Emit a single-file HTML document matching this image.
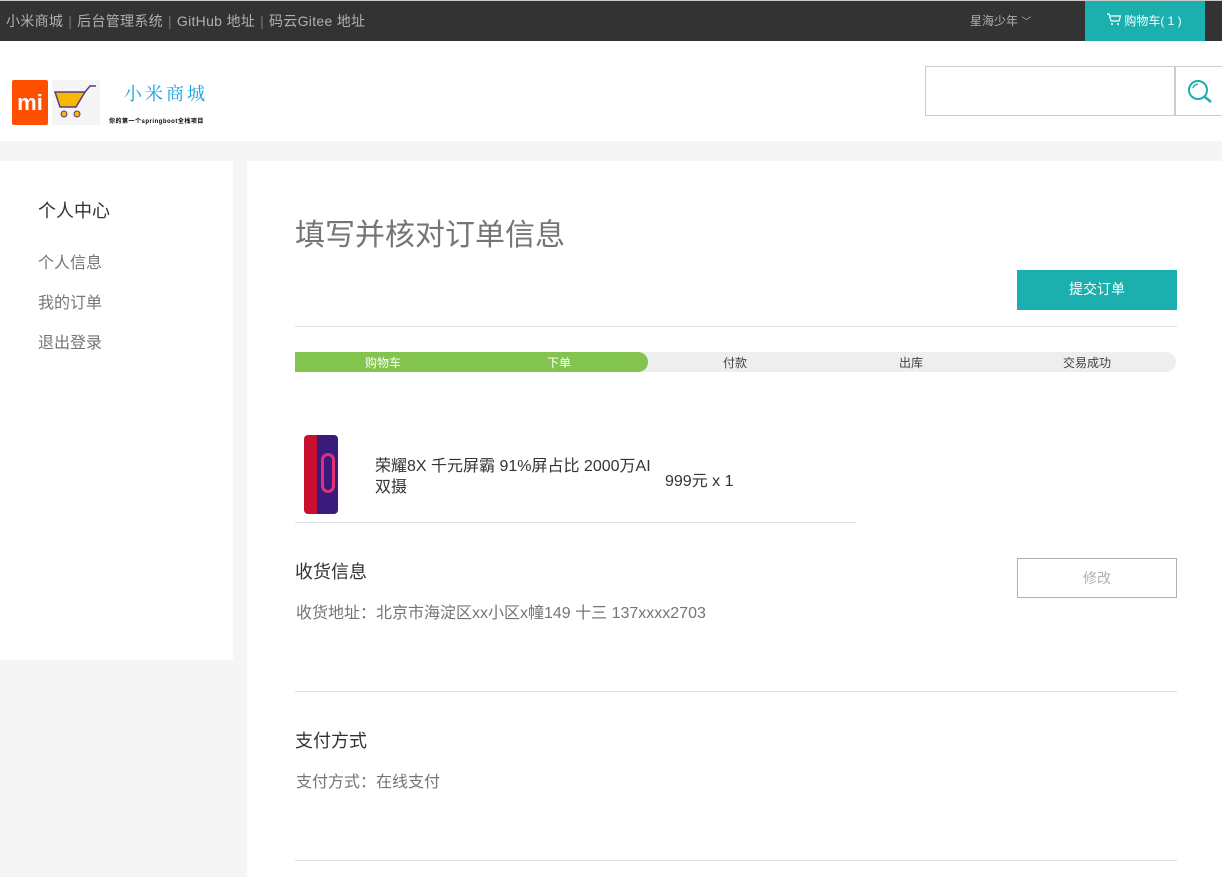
<!DOCTYPE html>
<html><head><meta charset="utf-8"><style>
*{margin:0;padding:0;box-sizing:border-box}
body{width:1222px;height:877px;overflow:hidden;background:#f5f5f5;font-family:"Liberation Sans","Noto Sans CJK SC",sans-serif;position:relative}
.a{position:absolute}
</style></head><body>
<div class="a" style="left:0;top:0;width:1222px;height:41px;background:#333;border-top:1px solid #ccc"></div>
<div class="a" style="left:6px;top:11px;font-size:14px;color:#b0b0b0;white-space:nowrap;letter-spacing:0.3px">小米商城<span style="color:#777;margin:0 5px">|</span>后台管理系统<span style="color:#777;margin:0 5px">|</span>GitHub 地址<span style="color:#777;margin:0 5px">|</span>码云Gitee 地址</div>
<div class="a" style="left:970px;top:12px;font-size:12px;color:#b0b0b0">星海少年 <span style="font-size:10px">﹀</span></div>
<div class="a" style="left:1085px;top:1px;width:120px;height:40px;background:#1bb0ad;color:#fff;font-size:12px;line-height:40px;padding-left:22px">
<svg width="14" height="13" viewBox="0 0 14 13" style="vertical-align:-1px"><path d="M0 1h2l2 7h8l1.5-5H3.5" fill="none" stroke="#fff" stroke-width="1.2"/><circle cx="5" cy="11" r="1" fill="#fff"/><circle cx="11" cy="11" r="1" fill="#fff"/></svg> 购物车( 1 )</div>
<div class="a" style="left:0;top:41px;width:1222px;height:100px;background:#fff"></div>
<div class="a" style="left:12px;top:80px;width:36px;height:45px;background:#ff4f00;border-radius:2px;color:#fff;font-weight:bold;font-size:22px;text-align:center;line-height:45px">mi</div>
<div class="a" style="left:52px;top:80px;width:48px;height:45px;background:#f5f5f5">
<svg width="48" height="45"><path d="M3 12h30l-9 15H8z" fill="#f6b800" stroke="#5a3a8a" stroke-width="1.5"/><path d="M33 12l5-6h6" fill="none" stroke="#5a3a8a" stroke-width="1.5"/><circle cx="12" cy="34" r="3" fill="#f6b800" stroke="#5a3a8a"/><circle cx="25" cy="34" r="3" fill="#f6b800" stroke="#5a3a8a"/></svg></div>
<div class="a" style="left:124px;top:80px;font-size:18px;color:#1aa0e0;letter-spacing:3px;font-family:'Noto Serif CJK SC',serif">小米商城</div>
<div class="a" style="left:109px;top:116px;font-size:6px;color:#000;white-space:nowrap;font-weight:bold;letter-spacing:0.5px">你的第一个springboot全栈项目</div>
<div class="a" style="left:925px;top:66px;width:250px;height:50px;border:1px solid #ccc;background:#fff"></div>
<div class="a" style="left:1175px;top:66px;width:50px;height:50px;border:1px solid #ccc;background:#fff">
<svg width="48" height="48"><circle cx="22" cy="23" r="9" fill="none" stroke="#1bb0ad" stroke-width="2"/><path d="M29 30l6 5" stroke="#1bb0ad" stroke-width="2.5"/><path d="M17 21a6 6 0 0 1 5-4" fill="none" stroke="#1bb0ad" stroke-width="1.5"/></svg></div>
<div class="a" style="left:0;top:161px;width:233px;height:499px;background:#fff"></div>
<div class="a" style="left:38px;top:197px;font-size:18px;color:#333">个人中心</div>
<div class="a" style="left:38px;top:249px;font-size:16px;color:#757575">个人信息</div>
<div class="a" style="left:38px;top:289px;font-size:16px;color:#757575">我的订单</div>
<div class="a" style="left:38px;top:329px;font-size:16px;color:#757575">退出登录</div>
<div class="a" style="left:247px;top:161px;width:975px;height:716px;background:#fff"></div>
<div class="a" style="left:295px;top:210px;font-size:30px;color:#757575">填写并核对订单信息</div>
<div class="a" style="left:1017px;top:270px;width:160px;height:40px;background:#1bb0ad;color:#fff;font-size:14px;text-align:center;line-height:38px">提交订单</div>
<div class="a" style="left:295px;top:326px;width:882px;height:1px;background:#e0e0e0"></div>
<div class="a" style="left:295px;top:352px;width:881px;height:20px;background:#eee;border-radius:0 10px 10px 0"></div>
<div class="a" style="left:295px;top:352px;width:353px;height:20px;background:#83c44e;border-radius:0 10px 10px 0"></div>
<div class="a" style="left:295px;top:354px;width:881px;font-size:12px;color:#424242;display:flex">
<div style="width:176px;text-align:center;color:#fff">购物车</div><div style="width:176px;text-align:center;color:#fff">下单</div><div style="width:176px;text-align:center">付款</div><div style="width:176px;text-align:center">出库</div><div style="width:176px;text-align:center">交易成功</div></div>
<div class="a" style="left:304px;top:435px;width:34px;height:79px;border-radius:4px;background:linear-gradient(90deg,#c8102e 0 38%,#3a1a7a 38%);overflow:hidden"><div style="margin:18px 0 0 17px;width:14px;height:40px;border-radius:7px;border:3px solid #e0307a"></div></div>
<div class="a" style="left:375px;top:456px;width:285px;font-size:16px;line-height:21px;color:#333">荣耀8X 千元屏霸 91%屏占比 2000万AI双摄</div>
<div class="a" style="left:665px;top:467px;font-size:16px;color:#333">999元 x 1</div>
<div class="a" style="left:295px;top:522px;width:561px;height:1px;background:#e0e0e0"></div>
<div class="a" style="left:295px;top:558px;font-size:18px;color:#333">收货信息</div>
<div class="a" style="left:296px;top:599px;font-size:16px;color:#757575">收货地址：北京市海淀区xx小区x幢149 十三 137xxxx2703</div>
<div class="a" style="left:1017px;top:558px;width:160px;height:40px;border:1px solid #b0b0b0;color:#b0b0b0;font-size:14px;text-align:center;line-height:38px">修改</div>
<div class="a" style="left:295px;top:691px;width:882px;height:1px;background:#e0e0e0"></div>
<div class="a" style="left:295px;top:727px;font-size:18px;color:#333">支付方式</div>
<div class="a" style="left:296px;top:768px;font-size:16px;color:#757575">支付方式：在线支付</div>
<div class="a" style="left:295px;top:860px;width:882px;height:1px;background:#e0e0e0"></div>
</body></html>
